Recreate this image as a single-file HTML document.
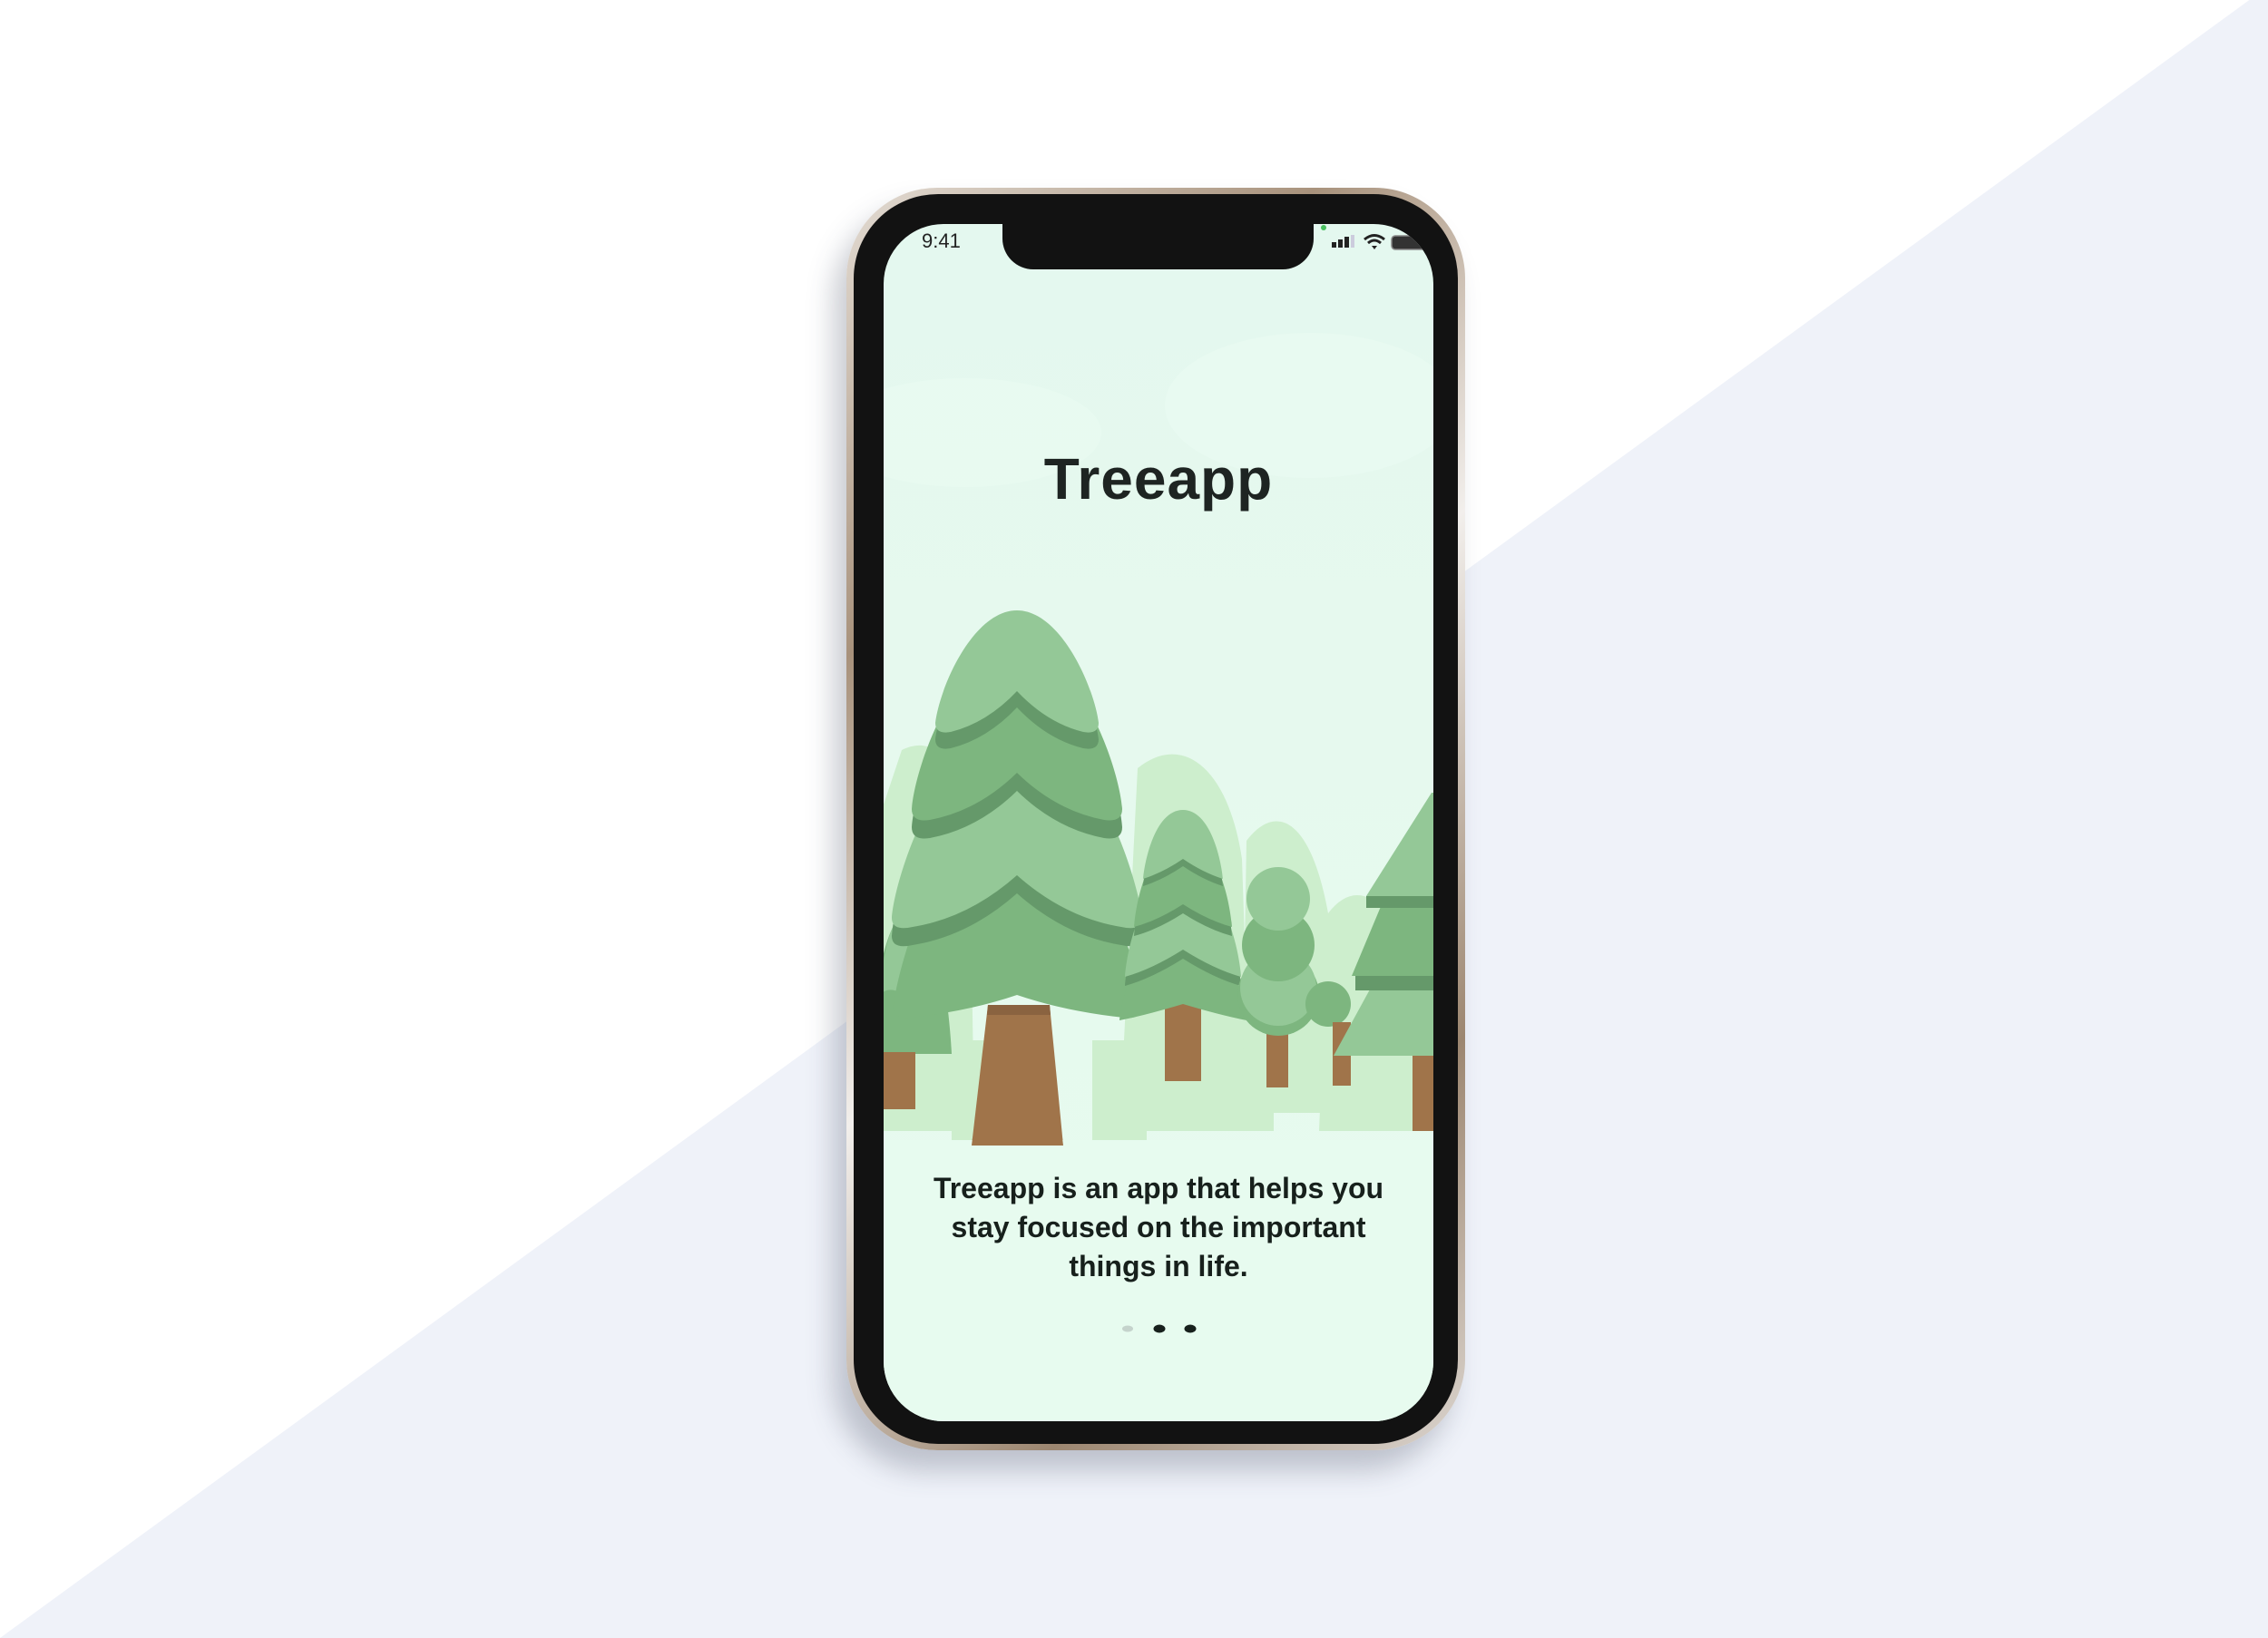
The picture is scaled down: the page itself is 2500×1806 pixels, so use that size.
<!DOCTYPE html>
<html><head><meta charset="utf-8"><style>
html,body{margin:0;padding:0;width:2500px;height:1806px;overflow:hidden;background:#fff;font-family:"Liberation Sans",sans-serif;}
.bg{position:absolute;left:0;top:0}
.phone{position:absolute;left:933px;top:207px;width:682px;height:1392px;border-radius:100px;background:linear-gradient(135deg,#e4ddd5,#a8927c 25%,#f2efec 50%,#9c8670 78%,#dcd6d0);box-shadow:-14px 22px 30px rgba(60,70,90,.28);}
.bezel{position:absolute;left:941px;top:214px;width:666px;height:1378px;border-radius:93px;background:#121212;}
.screen{position:absolute;left:974px;top:247px;width:606px;height:1320px;border-radius:66px;overflow:hidden;background:linear-gradient(#e4f8ef,#e6f9ee 40%,#e7fbef);}
.notch{position:absolute;left:131px;top:0;width:343px;height:50px;background:#121212;border-radius:0 0 34px 34px;}
.time{position:absolute;left:42px;top:6px;font-size:22px;color:#222;}
.title{position:absolute;left:0;width:606px;top:244px;text-align:center;font-size:64px;font-weight:bold;color:#1e2422;letter-spacing:1px;}
.body{position:absolute;left:0;width:606px;top:1042px;text-align:center;font-size:32px;font-weight:bold;line-height:43px;color:#17201c;}
</style></head><body>
<svg class="bg" width="2500" height="1806"><polygon points="2500,-15 2500,1806 0,1806" fill="#eff2f9"/></svg>
<div class="phone"></div>
<div class="bezel"></div>
<div class="screen">
<svg width="606" height="1320" style="position:absolute;left:0;top:0">
 <ellipse cx="470" cy="200" rx="160" ry="80" fill="#eafbf2" opacity=".7"/>
 <ellipse cx="90" cy="230" rx="150" ry="60" fill="#eafbf2" opacity=".6"/>
 <g fill="#cdeecd">
  <path d="M280,600 C330,560 380,600 395,700 L405,1000 L260,1000 Z"/>
  <path d="M400,680 C430,640 470,650 490,760 L500,980 L395,980 Z"/>
  <path d="M490,760 C520,720 560,740 580,820 L590,1000 L480,1000 Z"/>
  <path d="M20,580 C60,560 90,600 95,680 L100,1000 L0,1000 L0,640 Z"/>
  <rect x="75" y="900" width="40" height="110"/>
  <rect x="230" y="900" width="60" height="110"/>
  <rect x="380" y="940" width="50" height="60"/>
 </g>
 <g>
  <path d="M30,757 C60,757 72,860 75,915 L-15,915 C-12,860 0,757 30,757 Z" fill="#7db67f"/>
  <path d="M30,757 C55,757 62,820 65,850 Q48,835 30,860 Q12,835 -5,850 C-2,820 5,757 30,757Z" fill="#94c897"/>
  <rect x="0" y="913" width="35" height="63" fill="#a0744a"/>
 </g>
 <g>
  <path d="M147,640 C230,640 280,820 285,860 Q285,878 265,875 Q200,868 147,850 Q94,868 29,875 Q9,878 11,860 C16,820 64,640 147,640Z" fill="#7db67f"/>
  <path d="M147,580 C230,580 282,735 285,785 Q285,800 262,795 Q200,785 147,738 Q94,785 32,795 Q9,800 9,785 C12,735 64,580 147,580Z" fill="#65996a"/>
  <path d="M147,560 C230,560 280,720 285,765 Q285,780 262,775 Q200,765 147,718 Q94,765 32,775 Q9,780 9,765 C12,720 64,560 147,560Z" fill="#94c897"/>
  <path d="M147,490 C215,490 260,620 263,665 Q263,680 243,677 Q190,667 147,625 Q104,667 51,677 Q31,680 31,665 C34,620 79,490 147,490Z" fill="#65996a"/>
  <path d="M147,470 C215,470 260,600 263,645 Q263,660 243,657 Q190,647 147,605 Q104,647 51,657 Q31,660 31,645 C34,600 79,470 147,470Z" fill="#7db67f"/>
  <path d="M147,426 C195,426 232,510 237,550 Q237,563 220,560 Q180,550 147,515 Q114,550 74,560 Q57,563 57,550 C62,510 99,426 147,426Z" fill="#65996a" transform="translate(0,18)"/>
  <path d="M147,426 C195,426 232,510 237,550 Q237,563 220,560 Q180,550 147,515 Q114,550 74,560 Q57,563 57,550 C62,510 99,426 147,426Z" fill="#94c897"/>
  <polygon points="115,861 183,861 198,1016 97,1016" fill="#a0744a"/>
  <polygon points="115,861 183,861 184,872 114,872" fill="#8a6340"/>
 </g>
 <g>
  <rect x="310" y="860" width="40" height="85" fill="#a0744a"/>
  <path d="M330,770 C380,770 398,860 400,878 Q370,872 330,860 Q290,872 260,878 C262,860 280,770 330,770Z" fill="#7db67f"/>
  <path d="M330,720 C375,720 392,800 394,830 Q365,822 330,800 Q295,822 266,830 C268,800 285,720 330,720Z" fill="#65996a" transform="translate(0,10)"/>
  <path d="M330,720 C375,720 392,800 394,830 Q365,822 330,800 Q295,822 266,830 C268,800 285,720 330,720Z" fill="#94c897"/>
  <path d="M330,680 C370,680 382,750 384,775 Q358,768 330,750 Q302,768 276,775 C278,750 290,680 330,680Z" fill="#65996a" transform="translate(0,10)"/>
  <path d="M330,680 C370,680 382,750 384,775 Q358,768 330,750 Q302,768 276,775 C278,750 290,680 330,680Z" fill="#7db67f"/>
  <path d="M330,646 C360,646 372,700 374,722 Q352,715 330,700 Q308,715 286,722 C288,700 300,646 330,646Z" fill="#65996a" transform="translate(0,8)"/>
  <path d="M330,646 C360,646 372,700 374,722 Q352,715 330,700 Q308,715 286,722 C288,700 300,646 330,646Z" fill="#94c897"/>
 </g>
 <g>
  <rect x="422" y="880" width="24" height="72" fill="#a0744a"/>
  <circle cx="435" cy="850" r="45" fill="#7db67f"/>
  <circle cx="435" cy="842" r="42" fill="#94c897"/>
  <circle cx="435" cy="795" r="40" fill="#7db67f"/>
  <circle cx="435" cy="744" r="35" fill="#94c897"/>
  <circle cx="490" cy="860" r="25" fill="#7db67f"/>
  <rect x="495" y="880" width="20" height="70" fill="#a0744a"/>
 </g>
 <g>
  <rect x="583" y="915" width="23" height="85" fill="#a0744a"/>
  <polygon points="640,800 640,917 496,917 560,800" fill="#94c897"/>
  <rect x="520" y="829" width="120" height="16" fill="#65996a"/>
  <polygon points="640,700 640,829 516,829 570,700" fill="#7db67f"/>
  <rect x="532" y="741" width="110" height="13" fill="#65996a"/>
  <polygon points="604,627 640,627 640,741 532,741" fill="#94c897"/>
 </g>
 <rect x="0" y="1010" width="606" height="310" fill="#e7fbef"/>
 <polygon points="98,1008 197,1008 198,1016 97,1016" fill="#a0744a"/>
 <ellipse cx="269" cy="1218" rx="6" ry="3.5" fill="#c5d3cc"/>
 <ellipse cx="304" cy="1218" rx="6.5" ry="4.5" fill="#17201c"/>
 <ellipse cx="338" cy="1218" rx="6.5" ry="4.5" fill="#17201c"/>
 <rect x="494" y="20" width="5" height="6" fill="#222"/>
 <rect x="501" y="17" width="5" height="9" fill="#222"/>
 <rect x="508" y="14" width="5" height="12" fill="#222"/>
 <rect x="515" y="12" width="4" height="14" fill="#ccd"/>
 <path d="M530,17 Q541,8 552,17 M534,21 Q541,15 548,21" stroke="#222" stroke-width="3" fill="none"/>
 <path d="M538,24 L541,28 L544,24 Z" fill="#222"/>
 <rect x="560" y="13" width="40" height="15" rx="4" fill="#333" stroke="#888" stroke-width="1.5"/>
 <circle cx="485" cy="4" r="3" fill="#4ac060"/>
</svg>
<div class="notch"></div>
<div class="time">9:41</div>
<div class="title">Treeapp</div>
<div class="body">Treeapp is an app that helps you<br>stay focused on the important<br>things in life.</div>
</div>
</body></html>
